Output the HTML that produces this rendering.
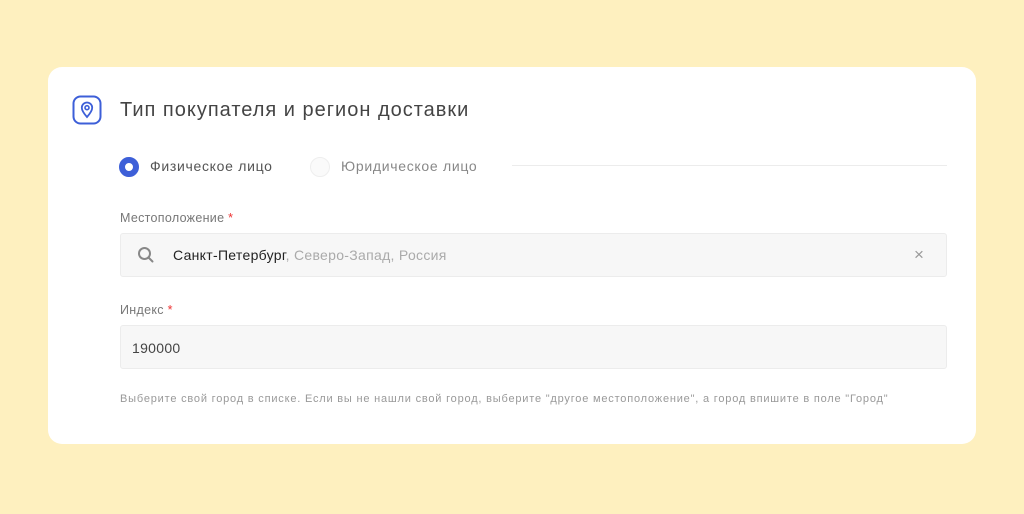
<!DOCTYPE html>
<html><head><meta charset="utf-8"><style>
*{box-sizing:border-box;margin:0;padding:0}
body{width:1024px;height:514px;background:#fef0bf;font-family:"Liberation Sans",sans-serif;position:relative;overflow:hidden}
.card{position:absolute;left:48px;top:67px;width:928px;height:377px;background:#fff;border-radius:14px}
.a{position:absolute;white-space:nowrap}
.title{left:120px;top:99px;font-size:20px;color:#444;letter-spacing:1px}
.lbl{font-size:12.5px;color:#777;letter-spacing:0.3px}
.lbl b{color:#e33;font-weight:normal}
.field{left:120px;width:827px;height:44px;background:#f7f7f7;border:1px solid #ececec;border-radius:3px}
</style></head><body>
<div class="card"></div>
<svg class="a" style="left:72px;top:95px" width="30" height="30" viewBox="0 0 30 30"><rect x="1.5" y="1.5" width="27" height="27" rx="7" fill="none" stroke="#3d5fd8" stroke-width="2"/><path d="M15 22c-3.5-4-5.2-6.7-5.2-9.3a5.2 5.2 0 0 1 10.4 0c0 2.6-1.7 5.3-5.2 9.3z" fill="none" stroke="#3d5fd8" stroke-width="1.8"/><circle cx="15" cy="12.7" r="2" fill="none" stroke="#3d5fd8" stroke-width="1.6"/></svg>
<div class="a title">Тип покупателя и регион доставки</div>
<div class="a" style="left:119px;top:157px;width:20px;height:20px;border-radius:50%;border:6px solid #3d5fd8;background:#fff"></div>
<div class="a" style="left:150px;top:158px;font-size:14px;color:#555;letter-spacing:0.7px">Физическое лицо</div>
<div class="a" style="left:310px;top:157px;width:20px;height:20px;border-radius:50%;border:1px solid #eee;background:#fafafa"></div>
<div class="a" style="left:341px;top:158px;font-size:14px;color:#888;letter-spacing:0.7px">Юридическое лицо</div>
<div class="a" style="left:512px;top:165px;width:435px;height:1px;background:#ececec"></div>
<div class="a lbl" style="left:120px;top:211px">Местоположение <b>*</b></div>
<div class="a field" style="top:233px"></div>
<svg class="a" style="left:137px;top:246px" width="18" height="18" viewBox="0 0 18 18"><circle cx="7.5" cy="7.5" r="5.5" fill="none" stroke="#888" stroke-width="2"/><path d="M11.5 11.5l4 4" stroke="#888" stroke-width="2" stroke-linecap="round"/></svg>
<div class="a" style="left:173px;top:247px;font-size:14px;color:#222;letter-spacing:0.3px">Санкт-Петербург<span style="color:#aaa">, Северо-Запад, Россия</span></div>
<div class="a" style="left:914px;top:245px;font-size:17px;color:#999">×</div>
<div class="a lbl" style="left:120px;top:303px">Индекс <b>*</b></div>
<div class="a field" style="top:325px"></div>
<div class="a" style="left:132px;top:340px;font-size:14px;color:#444;letter-spacing:0.3px">190000</div>
<div class="a" style="left:120px;top:393px;font-size:11px;color:#999;letter-spacing:0.8px">Выберите свой город в списке. Если вы не нашли свой город, выберите "другое местоположение", а город впишите в поле "Город"</div>
</body></html>
